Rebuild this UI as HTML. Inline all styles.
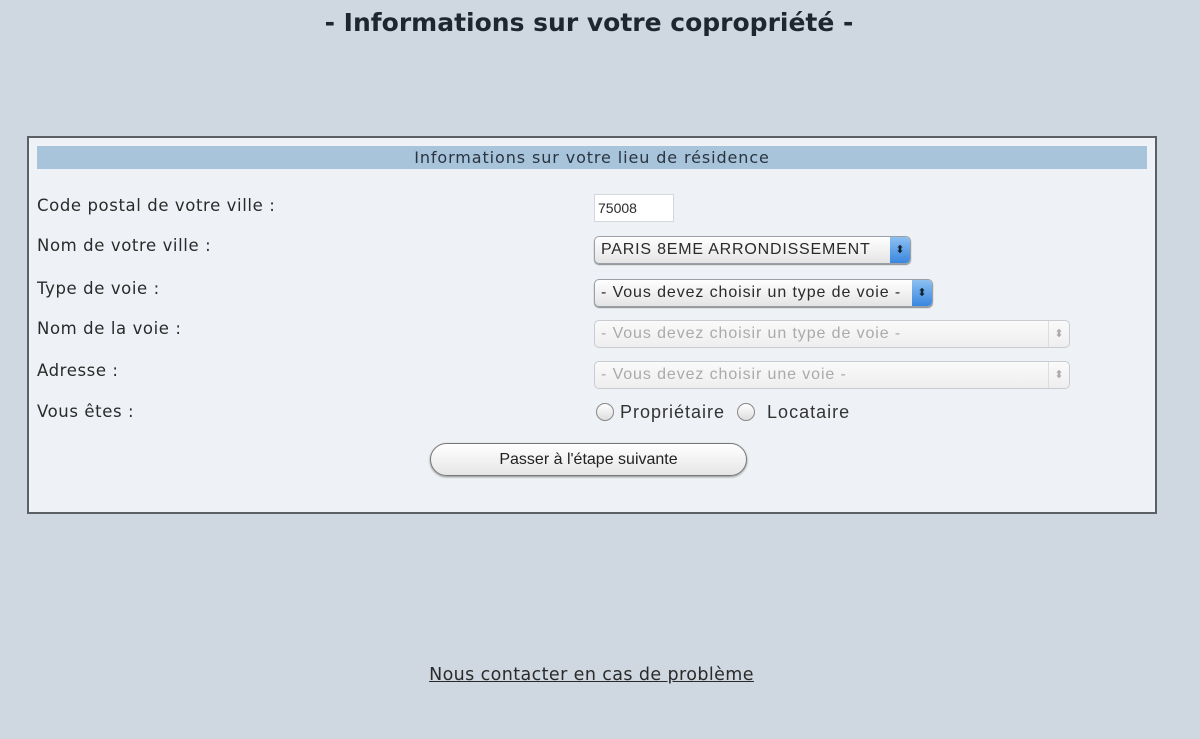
<!DOCTYPE html>
<html><head><meta charset="utf-8"><style>
body{margin:0;width:1200px;height:739px;background:#cfd8e0;font-family:"DejaVu Sans",Verdana,sans-serif;color:#2a2a2a;position:relative;overflow:hidden}
.t{position:absolute;left:0;width:1178px;top:8px;text-align:center;font-weight:bold;font-size:25px;color:#1e2630}
.box{position:absolute;left:27px;top:136px;width:1126px;height:374px;border:2px solid #5c6064;background:#eef2f6}
.hd{position:absolute;left:8px;top:8px;width:1110px;height:23px;background:#a8c4da;text-align:center;font-size:16px;letter-spacing:0.9px;line-height:23px;color:#2a3440}
.l{position:absolute;left:8px;font-size:16.5px;letter-spacing:0.6px}
.c{position:absolute;left:565px;font-family:"Liberation Sans",sans-serif;font-size:14px}
.inp{width:80px;height:28px;background:#fff;border:1px solid #d4d8dc;box-sizing:border-box;padding:5px 3px;font-size:14px}
.sel{position:absolute;height:28px;border:1px solid #9aa0a6;border-radius:5px;background:linear-gradient(#fff,#e4e4e4);box-sizing:border-box;padding:4px 6px;box-shadow:0 1px 1px #888;font-size:16px;letter-spacing:0.8px;white-space:nowrap;overflow:hidden}
.ar{position:absolute;right:0;top:0;bottom:0;width:20px;border-radius:0 4px 4px 0;background:linear-gradient(#8cc0f0,#3a86e0);color:#123;text-align:center;font-size:11px;line-height:26px;letter-spacing:0}
.dis{color:#aaa;border-color:#c8ccd0;box-shadow:none;background:linear-gradient(#fafafa,#eee)}
.dis .ar{background:none;border-left:1px solid #ddd;color:#aaa}
.rad{display:inline-block;width:16px;height:16px;border:1px solid #888;border-radius:50%;background:linear-gradient(#fff,#ddd);vertical-align:-3px;margin-right:6px}
.btn{position:absolute;left:401px;top:305px;width:317px;height:33px;border:1px solid #777;border-radius:17px;background:linear-gradient(#fff,#e6e6e6);box-sizing:border-box;text-align:center;line-height:31px;font-family:"Liberation Sans",sans-serif;font-size:16px;color:#222;box-shadow:0 1px 2px #888}
.lk{position:absolute;left:0;width:1183px;top:665px;text-align:center;font-size:17.5px;letter-spacing:0.4px;text-decoration:underline;color:#2a2a2a}
</style></head><body>
<div class="t">- Informations sur votre copropriété -</div>
<div class="box">
<div class="hd">Informations sur votre lieu de résidence</div>
<div class="l" style="top:58px">Code postal de votre ville :</div>
<div class="l" style="top:98px">Nom de votre ville :</div>
<div class="l" style="top:141px">Type de voie :</div>
<div class="l" style="top:181px">Nom de la voie :</div>
<div class="l" style="top:223px">Adresse :</div>
<div class="l" style="top:264px">Vous êtes :</div>
<div class="c inp" style="top:56px">75008</div>
<div class="c sel" style="top:98px;width:317px">PARIS 8EME ARRONDISSEMENT<div class="ar">⬍</div></div>
<div class="c sel" style="top:141px;width:339px;letter-spacing:0.9px">- Vous devez choisir un type de voie -<div class="ar">⬍</div></div>
<div class="c sel dis" style="top:182px;width:476px;letter-spacing:0.9px">- Vous devez choisir un type de voie -<div class="ar">⬍</div></div>
<div class="c sel dis" style="top:223px;width:476px;letter-spacing:0.9px">- Vous devez choisir une voie -<div class="ar">⬍</div></div>
<div class="c" style="top:264px;font-size:18px;letter-spacing:1px;left:567px;color:#333"><span class="rad"></span>Propriétaire&nbsp; <span class="rad"></span> Locataire</div>
<div class="btn">Passer à l'étape suivante</div>
</div>
<div class="lk">Nous contacter en cas de problème</div>
</body></html>
